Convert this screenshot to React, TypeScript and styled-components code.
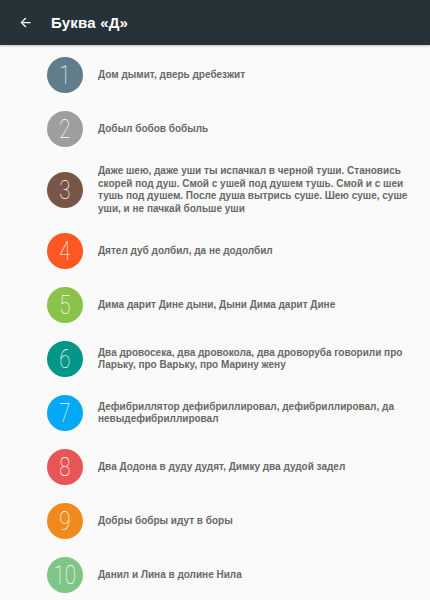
import styled, { createGlobalStyle } from "styled-components";

const GlobalStyle = createGlobalStyle`
  html, body {
    margin: 0;
    padding: 0;
    background: #fafafa;
  }
  * {
    box-sizing: border-box;
  }
`;

const StyledPage = styled.div`
  display: flex;
  flex-direction: column;
  min-height: 600px;
  background: #fafafa;
  font-family: "Liberation Sans", Arial, sans-serif;
`;

const StyledToolbar = styled.div`
  display: flex;
  flex-direction: row;
  align-items: center;
  height: 45px;
  padding: 0 0 0 17px;
  gap: 18px;
  background: #263238;
  box-shadow: 0 1px 2px rgba(0, 0, 0, 0.25);
`;

const StyledBackButton = styled.div`
  display: flex;
  align-items: center;
  justify-content: center;
  width: 16px;
  height: 16px;
`;

const StyledTitle = styled.h1`
  margin: 0;
  font-size: 15px;
  font-weight: 700;
  color: #ffffff;
  letter-spacing: 0.2px;
`;

const StyledList = styled.div`
  display: flex;
  flex-direction: column;
  padding: 3px 0 0;
`;

const StyledRow = styled.div`
  display: flex;
  flex-direction: row;
  align-items: center;
  gap: 15px;
  padding: 9px 18px 9px 47px;
`;

const StyledCircle = styled.div<{ color: string }>`
  flex: 0 0 36px;
  width: 36px;
  height: 36px;
  border-radius: 50%;
  background: ${(props) => props.color};
  display: flex;
  align-items: center;
  justify-content: center;
  color: #ffffff;
  font-family: Roboto, "Liberation Sans", sans-serif;
  font-weight: 100;
  font-size: 25px;
  line-height: 1;
`;

const StyledNumber = styled.span`
  display: inline-block;
  transform: scaleX(0.82);
`;

const StyledText = styled.p`
  margin: 0;
  font-size: 10px;
  line-height: 12.5px;
  font-weight: 700;
  color: #686868;
`;

type Tongue = {
  color: string;
  text: string;
};

const tongues: Tongue[] = [
  { color: "#607d8b", text: "Дом дымит, дверь дребезжит" },
  { color: "#9e9e9e", text: "Добыл бобов бобыль" },
  {
    color: "#795548",
    text: "Даже шею, даже уши ты испачкал в черной туши. Становись скорей под душ. Смой с ушей под душем тушь. Смой и с шеи тушь под душем. После душа вытрись суше. Шею суше, суше уши, и не пачкай больше уши",
  },
  { color: "#ff5722", text: "Дятел дуб долбил, да не додолбил" },
  { color: "#8bc34a", text: "Дима дарит Дине дыни, Дыни Дима дарит Дине" },
  {
    color: "#009688",
    text: "Два дровосека, два дровокола, два дроворуба говорили про Ларьку, про Варьку, про Марину жену",
  },
  {
    color: "#03a9f4",
    text: "Дефибриллятор дефибриллировал, дефибриллировал, да невыдефибриллировал",
  },
  { color: "#e85555", text: "Два Додона в дуду дудят, Димку два дудой задел" },
  { color: "#f08a1c", text: "Добры бобры идут в боры" },
  { color: "#7fc587", text: "Данил и Лина в долине Нила" },
];

export default function App() {
  return (
    <StyledPage>
      <GlobalStyle />
      <StyledToolbar>
        <StyledBackButton>
          <svg width="15" height="15" viewBox="0 0 24 24">
            <path
              d="M20 11H7.83l5.59-5.59L12 4l-8 8 8 8 1.41-1.41L7.83 13H20v-2z"
              fill="#ffffff"
            />
          </svg>
        </StyledBackButton>
        <StyledTitle>Буква «Д»</StyledTitle>
      </StyledToolbar>
      <StyledList>
        {tongues.map((item, index) => (
          <StyledRow key={index}>
            <StyledCircle color={item.color}>
              <StyledNumber>{index + 1}</StyledNumber>
            </StyledCircle>
            <StyledText>{item.text}</StyledText>
          </StyledRow>
        ))}
      </StyledList>
    </StyledPage>
  );
}
